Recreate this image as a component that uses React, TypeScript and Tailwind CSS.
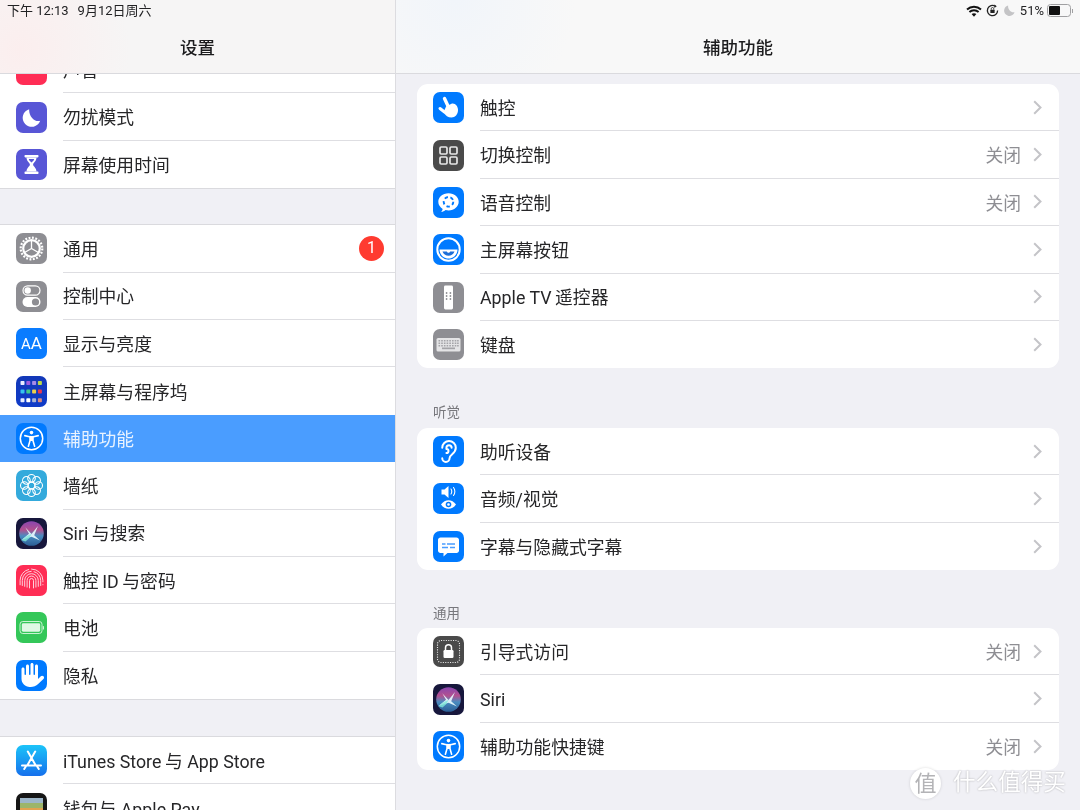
import { useId, type ReactNode } from "react";
import { Ear } from "lucide-react";
import { FaHand } from "react-icons/fa6";

function Tile({ bg, children }: { bg: string; children: ReactNode }) {
  return (
    <div className={`flex size-[31px] shrink-0 items-center justify-center overflow-hidden rounded-[7px] ${bg}`}>
      {children}
    </div>
  );
}

function Glyph({ children }: { children: ReactNode }) {
  return (
    <svg viewBox="0 0 31 31" className="size-[31px]" fill="none">
      {children}
    </svg>
  );
}

function Accessibility() {
  return (
    <Tile bg="bg-[#007aff]">
      <Glyph>
        <circle cx="15.5" cy="15.5" r="11.2" stroke="#fff" strokeWidth="1.5" />
        <circle cx="15.5" cy="9.6" r="1.8" fill="#fff" />
        <path d="M8.8 12.6l4.600 1.100h4.200l4.600-1.100" stroke="#fff" strokeWidth="1.600" strokeLinecap="round" />
        <path d="M14 13.600v4l-1.600 5.600M17 13.600v4l1.600 5.600" stroke="#fff" strokeWidth="1.600" strokeLinecap="round" />
        <rect x="14" y="13.500" width="3" height="4.500" fill="#fff" />
      </Glyph>
    </Tile>
  );
}

function Siri() {
  const id = useId();
  return (
    <Tile bg="bg-[#17173c]">
      <Glyph>
        <defs>
          <linearGradient id={id} x1="0.5" y1="0" x2="0.5" y2="1">
            <stop offset="0%" stopColor="#8a46b0" />
            <stop offset="35%" stopColor="#b2508f" />
            <stop offset="60%" stopColor="#4a8cc0" />
            <stop offset="100%" stopColor="#2b5e96" />
          </linearGradient>
        </defs>
        <circle cx="15.5" cy="15.5" r="12.300" fill={`url(#${id})`} />
        <path d="M15.500 16L22 8l-3.800 9.300 5.800 5.200-8.500-3.700-10 3.300 7.500-6.300-3.700-6.500z" fill="#e9fbff" opacity="0.9" />
        <path d="M5.500 22.300c3.500-3.300 6.500-5.300 10-6.300-1.500 3.300-3 5.300-6 7.500z" fill="#7fe8d8" opacity="0.8" />
      </Glyph>
    </Tile>
  );
}

const sidebarIcons: Record<string, ReactNode> = {
  sound: <Tile bg="bg-[#ff2d55]"><span /></Tile>,
  moon: (
    <Tile bg="bg-[#5856d6]">
      <Glyph>
        <path d="M13.200 7.200a9 9 0 1 0 11 11.600c-5.800 1.600-11.600-4.800-11-11.600z" fill="#fff" />
      </Glyph>
    </Tile>
  ),
  hourglass: (
    <Tile bg="bg-[#5856d6]">
      <Glyph>
        <rect x="8.500" y="6" width="14" height="2.400" rx="0.800" fill="#fff" />
        <rect x="8.500" y="22.600" width="14" height="2.400" rx="0.800" fill="#fff" />
        <path d="M10.500 8.400h10c0 4-3.400 5-3.400 7.100s3.400 3.100 3.400 7.100h-10c0-4 3.400-5 3.400-7.100s-3.400-3.100-3.400-7.100z" fill="#fff" />
        <path d="M12.800 10h5.400c-.4 1.800-1.700 2.600-2.700 3.600-1-1-2.300-1.800-2.700-3.600z" fill="#5856d6" />
      </Glyph>
    </Tile>
  ),
  gear: (
    <Tile bg="bg-[#8e8e93]">
      <Glyph>
        <circle cx="15.500" cy="15.500" r="10.800" stroke="#fff" strokeWidth="2.200" strokeDasharray="1.900 1.500" />
        <circle cx="15.500" cy="15.500" r="8.300" stroke="#fff" strokeWidth="2.200" />
        <path d="M15.500 15.500V8M15.500 15.500l6.500 3.800M15.500 15.500L9 19.300" stroke="#fff" strokeWidth="1.300" />
      </Glyph>
    </Tile>
  ),
  toggles: (
    <Tile bg="bg-[#8e8e93]">
      <Glyph>
        <rect x="7" y="4.800" width="17" height="9.400" rx="4.700" stroke="#fff" strokeWidth="1.200" />
        <circle cx="11.700" cy="9.500" r="3.200" fill="#fff" />
        <rect x="6.500" y="16" width="18" height="10" rx="5" fill="#fff" />
        <circle cx="19.500" cy="21" r="3.600" fill="#8e8e93" />
      </Glyph>
    </Tile>
  ),
  aa: (
    <Tile bg="bg-[#0a7cff]">
      <span className="text-[17px] leading-none text-white">
        <span className="text-[15px]">A</span>A
      </span>
    </Tile>
  ),
  home: (
    <Tile bg="bg-[linear-gradient(180deg,#1338b8,#0f3bc8)]">
      <Glyph>
        {[
          ["#e8ecff", "#a05ce0", "#a58ae8", "#b9d84a"],
          ["#35c3ee", "#42c98a", "#f0cf4a", "#e8384f"],
          ["#e6ecff", "#ffffff", "#a9b4d4", "#d98a80"],
        ].map((row, y) =>
          row.map((c, x) => <rect key={`${x}-${y}`} x={4.500 + x * 5.800} y={5 + y * 8.600} width="4" height="4" rx="0.800" fill={c} />),
        )}
      </Glyph>
    </Tile>
  ),
  access: <Accessibility />,
  wallpaper: (
    <Tile bg="bg-[#34aadc]">
      <Glyph>
        {[0, 45, 90, 135, 180, 225, 270, 315].map((a) => (
          <circle key={a} cx="15.500" cy="8.300" r="3.800" stroke="#fff" strokeWidth="1.100" transform={`rotate(${a} 15.500 15.500)`} />
        ))}
        <circle cx="15.500" cy="15.500" r="3.400" stroke="#fff" strokeWidth="1.100" />
      </Glyph>
    </Tile>
  ),
  siri: <Siri />,
  touchid: (
    <Tile bg="bg-[#ff2d55]">
      <Glyph>
        {[2, 4.400, 6.800, 9.200, 11.400].map((r) => (
          <path key={r} d={`M${15.500 - r} ${24 - r / 3}V15.500a${r} ${r} 0 0 1 ${2 * r} 0V${24 - r / 3}`} stroke="#ffd0da" strokeWidth="1" strokeDasharray={r > 8 ? "20 2" : undefined} />
        ))}
      </Glyph>
    </Tile>
  ),
  battery: (
    <Tile bg="bg-[#34c759]">
      <Glyph>
        <rect x="4" y="9.500" width="22" height="12" rx="2.800" stroke="#c9f2d3" strokeWidth="1" />
        <rect x="5.800" y="11.300" width="18.400" height="8.400" rx="1.400" fill="#dff8e5" />
        <rect x="26.800" y="14" width="1.200" height="3.500" rx="0.600" fill="#c9f2d3" />
      </Glyph>
    </Tile>
  ),
  privacy: (
    <Tile bg="bg-[#007aff]">
      <FaHand className="size-[24px] -scale-x-100 text-white" />
    </Tile>
  ),
  appstore: (
    <Tile bg="bg-[linear-gradient(180deg,#1cc4f9,#1670ec)]">
      <Glyph>
        <path d="M19.200 6.500L11.500 20M11.800 6.500l7.700 13.500M6 20.500h19M8.200 24l1.600-2.500M22.800 24l-1.600-2.500" stroke="#fff" strokeWidth="2" strokeLinecap="round" />
      </Glyph>
    </Tile>
  ),
  wallet: (
    <Tile bg="bg-[#161616]">
      <Glyph>
        <rect x="4" y="5" width="23" height="5" fill="#9db6c9" />
        <rect x="4" y="10" width="23" height="5" fill="#9cb56a" />
        <rect x="4" y="15" width="23" height="5" fill="#e2a24f" />
        <rect x="4" y="20" width="23" height="6" fill="#d9685c" />
      </Glyph>
    </Tile>
  ),
};

const detailIcons: Record<string, ReactNode> = {
  touch: (
    <Tile bg="bg-[#007aff]">
      <Glyph>
        <path d="M11.500 6.500l4.200 9" stroke="#fff" strokeWidth="3.400" strokeLinecap="round" />
        <path d="M7 16.500l4.500 3.500" stroke="#fff" strokeWidth="3" strokeLinecap="round" />
        <path d="M13 14.500l6-3c3.500-.5 6 3 6 6.500 0 4.500-3 7.500-6.500 7.500-3.500 0-6-2-8-5z" fill="#fff" />
      </Glyph>
    </Tile>
  ),
  switch: (
    <Tile bg="bg-[#4a4a4a]">
      <Glyph>
        {[7, 17].map((x) =>
          [7, 17].map((y) => (
            <rect key={`${x}-${y}`} x={x} y={y} width="7" height="7" rx="1.200" stroke="#e6e6e6" strokeWidth="1.700" />
          )),
        )}
      </Glyph>
    </Tile>
  ),
  voice: (
    <Tile bg="bg-[#007aff]">
      <Glyph>
        <path d="M15.500 6.200c5.900 0 10.200 3.800 10.200 8.600s-4.300 8.600-10.200 8.600c-1 0-2-.1-2.900-.4-1.200 1-2.800 1.700-4.400 1.900.8-.9 1.300-1.900 1.500-3-2.700-1.600-4.400-4.100-4.400-7.100 0-4.800 4.300-8.600 10.200-8.600z" fill="#fff" />
        <circle cx="15.500" cy="14.800" r="4.800" stroke="#007aff" strokeWidth="1.900" strokeDasharray="3.400 2.600" />
      </Glyph>
    </Tile>
  ),
  homebtn: (
    <Tile bg="bg-[#007aff]">
      <Glyph>
        <circle cx="15.500" cy="15.500" r="11.200" stroke="#fff" strokeWidth="2" />
        <path d="M6.500 15.500h18c0 5-4 9-9 9s-9-4-9-9z" fill="#fff" />
        <path d="M9.500 17.500h4.300l1 1.200h1.400l1-1.200h4.300c-.8 2.500-3.200 4.300-6 4.300s-5.200-1.800-6-4.300z" fill="#1d6fd8" />
      </Glyph>
    </Tile>
  ),
  remote: (
    <Tile bg="bg-[#8e8e93]">
      <Glyph>
        <rect x="11" y="3.500" width="9" height="24" rx="1.400" fill="#fff" />
        {[11, 14, 17].map((y) => (
          <g key={y}>
            <circle cx="13.600" cy={y} r="0.900" fill="#8e8e93" />
            <circle cx="17.400" cy={y} r="0.900" fill="#8e8e93" />
          </g>
        ))}
      </Glyph>
    </Tile>
  ),
  keyboard: (
    <Tile bg="bg-[#8e8e93]">
      <Glyph>
        <rect x="3.500" y="9" width="24" height="13.500" rx="1.600" fill="#e4e4e6" />
        {[11, 13.500, 16].map((y) =>
          [5.500, 8.200, 10.900, 13.600, 16.300, 19, 21.700, 24.100].map((x) => (
            <rect key={`${x}-${y}`} x={x} y={y} width="1.600" height="1.500" fill="#a4a4a8" />
          )),
        )}
        <rect x="9" y="18.500" width="13" height="1.700" fill="#a4a4a8" />
      </Glyph>
    </Tile>
  ),
  ear: (
    <Tile bg="bg-[#007aff]">
      <Ear className="size-[25px] text-white" strokeWidth={1.900} />
    </Tile>
  ),
  av: (
    <Tile bg="bg-[#007aff]">
      <Glyph>
        <path d="M8.500 6.500h3l4-3.500v12l-4-3.500h-3z" fill="#fff" />
        <path d="M18 6c1 1.200 1 3.800 0 5M20.500 4.500c1.800 2.200 1.800 5.800 0 8" stroke="#fff" strokeWidth="1.100" strokeLinecap="round" />
        <path d="M8 21.500c4-5.800 11-5.800 15 0-4 5.800-11 5.800-15 0z" fill="#fff" />
        <circle cx="15.500" cy="21.500" r="2.800" fill="#007aff" />
        <circle cx="15.500" cy="21.500" r="1.300" fill="#fff" />
      </Glyph>
    </Tile>
  ),
  caption: (
    <Tile bg="bg-[#007aff]">
      <Glyph>
        <path d="M7.500 6.500h16c1.400 0 2.500 1.100 2.500 2.500v10.500c0 1.400-1.100 2.500-2.500 2.500h-9l-4 3.500v-3.500h-3c-1.400 0-2.500-1.100-2.500-2.500V9c0-1.400 1.100-2.500 2.500-2.500z" fill="#fff" />
        <path d="M9 13h3.500M14 13h8M9 16.500h6M17 16.500h5" stroke="#4a9dff" strokeWidth="1.300" />
      </Glyph>
    </Tile>
  ),
  guided: (
    <Tile bg="bg-[#4a4a4a]">
      <Glyph>
        <rect x="4.500" y="4.500" width="22" height="22" rx="3.500" stroke="#e8e8e8" strokeWidth="1.100" strokeDasharray="1.100 1.300" />
        <rect x="10.500" y="14" width="10" height="8" rx="1.200" fill="#fff" />
        <path d="M12.500 14v-2.300a3 3 0 0 1 6 0V14" stroke="#fff" strokeWidth="1.500" />
      </Glyph>
    </Tile>
  ),
  siri: <Siri />,
  access: <Accessibility />,
};

type Item = { icon: string; label: string; value?: string };

const groups: { title: string; h: string; pb: string; items: Item[] }[] = [
  {
    title: "",
    h: "",
    pb: "",
    items: [
      { icon: "touch", label: "触控" },
      { icon: "switch", label: "切换控制", value: "关闭" },
      { icon: "voice", label: "语音控制", value: "关闭" },
      { icon: "homebtn", label: "主屏幕按钮" },
      { icon: "remote", label: "Apple TV\u2009遥控器" },
      { icon: "keyboard", label: "键盘" },
    ],
  },
  {
    title: "听觉",
    h: "h-[59.500px]",
    pb: "pb-[7px]",
    items: [
      { icon: "ear", label: "助听设备" },
      { icon: "av", label: "音频/视觉" },
      { icon: "caption", label: "字幕与隐藏式字幕" },
    ],
  },
  {
    title: "通用",
    h: "h-[58px]",
    pb: "pb-[6px]",
    items: [
      { icon: "guided", label: "引导式访问", value: "关闭" },
      { icon: "siri", label: "Siri" },
      { icon: "access", label: "辅助功能快捷键", value: "关闭" },
    ],
  },
];

function SideRow({ icon, label, active, badge, last }: { icon: string; label: string; active?: boolean; badge?: boolean; last?: boolean }) {
  return (
    <div className={`flex h-[47.400px] items-center pl-[16px] ${active ? "bg-[#4a9dff]" : ""}`}>
      {sidebarIcons[icon]}
      <div
        className={`ml-[16px] flex h-full flex-1 items-center justify-between pr-[11px] text-[17.800px] ${
          active ? "text-[#e9f3ff]" : "text-[#262628]"
        } ${last || active ? "" : "border-b border-[#dedee2]"}`}
      >
        <span className="pt-[4px]">{label}</span>
        {badge && (
          <span className="flex size-[25px] items-center justify-center rounded-full bg-[#ff3b30] text-[16px] text-white">1</span>
        )}
      </div>
    </div>
  );
}

function DetailRow({ item, last }: { item: Item; last: boolean }) {
  return (
    <div className="flex h-[47.400px] items-center pl-[16px]">
      {detailIcons[item.icon]}
      <div className={`ml-[16px] flex h-full flex-1 items-center pr-[17px] text-[17.800px] text-[#262628] ${last ? "" : "border-b border-[#dedee2]"}`}>
        <span className="flex-1 pt-[4px]">{item.label}</span>
        {item.value && <span className="mr-[12px] pt-[4px] text-[#8e8e93]">{item.value}</span>}
        <svg viewBox="0 0 9 15" className="h-[15px] w-[9px]" fill="none">
          <path d="M1.200 1.200l6.300 6.300-6.300 6.300" stroke="#c4c4c8" strokeWidth="2" />
        </svg>
      </div>
    </div>
  );
}

function StatusIcons() {
  return (
    <div className="flex items-center text-[13px] text-[#222224]">
      <svg viewBox="0 0 16 12" className="h-[12px] w-[16px]" fill="none">
        <path d="M1 4.500c3.900-3.700 10.100-3.700 14 0M3.400 7c2.600-2.400 6.600-2.400 9.200 0" stroke="#111" strokeWidth="1.900" />
        <path d="M5.600 9.100c1.500-1.300 3.300-1.300 4.800 0L8 11.800z" fill="#111" />
      </svg>
      <svg viewBox="0 0 14 14" className="ml-[4px] size-[13px]" fill="none">
        <path d="M12.500 7A5.500 5.500 0 1 1 10 2.400" stroke="#222" strokeWidth="1.400" />
        <path d="M9 0.500l2.600 2-2.600 1.900z" fill="#222" />
        <rect x="4.700" y="6.200" width="4.600" height="3.600" rx="0.500" fill="#222" />
        <path d="M5.600 6.200V5.200a1.400 1.400 0 0 1 2.800 0v1" stroke="#222" strokeWidth="0.900" />
      </svg>
      <svg viewBox="0 0 12 12" className="ml-[5px] size-[11px]">
        <path d="M4.500 0.500a5.800 5.800 0 1 0 7 7.300C7.800 8.800 3.900 4.800 4.500 0.500z" fill="#c4c4c6" />
      </svg>
      <span className="ml-[5px]">51%</span>
      <div className="ml-[3px] flex items-center">
        <div className="h-[13px] w-[24px] rounded-[3.500px] border border-[#a0a0a2] p-[1px]">
          <div className="h-full w-[11px] rounded-[1px] bg-[#111]" />
        </div>
        <div className="ml-[1px] h-[4px] w-[1px] bg-[#a0a0a2]" />
      </div>
    </div>
  );
}

export default function App() {
  return (
    <div className="relative flex h-[810px] w-[1080px] overflow-hidden bg-[#f0f0f5] blur-[0.500px] font-['Roboto','Noto_Sans_CJK_SC',sans-serif]">
      <div className="flex w-[396px] shrink-0 flex-col border-r border-[#dcdce0]">
        <header className="h-[74px] shrink-0 border-b border-[#dadade] bg-[radial-gradient(circle_at_20px_50px,#fbeeee,#f6f5f5_110px)]">
          <div className="flex h-[21px] items-center gap-[9px] pl-[7px] text-[13px] text-[#222224]">
            <span>下午 12:13</span>
            <span>9月12日周六</span>
          </div>
          <h1 className="mt-[15px] text-center text-[17.500px] leading-[24px] font-medium text-[#1c1c1e]">设置</h1>
        </header>
        <div className="flex-1 overflow-hidden">
          <div className="-mt-[28px] border-b border-[#dadade] bg-white">
            <SideRow icon="sound" label="声音" />
            <SideRow icon="moon" label="勿扰模式" />
            <SideRow icon="hourglass" label="屏幕使用时间" last />
          </div>
          <div className="mt-[35px] border-y border-[#dadade] bg-white">
            <SideRow icon="gear" label="通用" badge />
            <SideRow icon="toggles" label="控制中心" />
            <SideRow icon="aa" label="显示与亮度" />
            <SideRow icon="home" label="主屏幕与程序坞" last />
            <SideRow icon="access" label="辅助功能" active />
            <SideRow icon="wallpaper" label="墙纸" />
            <SideRow icon="siri" label={"Siri\u2009与搜索"} />
            <SideRow icon="touchid" label={"触控\u2009ID\u2009与密码"} />
            <SideRow icon="battery" label="电池" />
            <SideRow icon="privacy" label="隐私" last />
          </div>
          <div className="mt-[36px] border-y border-[#dadade] bg-white">
            <SideRow icon="appstore" label={"iTunes Store\u2009与 App Store"} />
            <SideRow icon="wallet" label="钱包与 Apple Pay" last />
          </div>
        </div>
      </div>

      <div className="flex flex-1 flex-col">
        <header className="h-[74px] shrink-0 border-b border-[#dadade] bg-[radial-gradient(circle_at_60px_0px,#f1f5fa,#f8f8f8_120px)]">
          <div className="flex h-[21px] items-center justify-end pr-[7px]">
            <StatusIcons />
          </div>
          <h2 className="mt-[15px] text-center text-[17.500px] leading-[24px] font-medium text-[#1c1c1e]">辅助功能</h2>
        </header>
        <div className="flex-1 overflow-hidden px-[21px] pt-[10px]">
          {groups.map((g) => (
            <section key={g.title}>
              {g.title && (
                <div className={`flex items-end pl-[16px] text-[13.500px] leading-[18px] text-[#77777c] ${g.h} ${g.pb}`}>{g.title}</div>
              )}
              <div className="overflow-hidden rounded-[11px] bg-white">
                {g.items.map((item, i) => (
                  <DetailRow key={item.label} item={item} last={i === g.items.length - 1} />
                ))}
              </div>
            </section>
          ))}
        </div>
      </div>

      <div className="absolute top-[768px] left-[910px] flex items-center gap-[12px]">
        <div className="flex size-[31px] items-center justify-center rounded-full bg-white text-[22px] leading-none text-[#b3b3b6] shadow-[0_0_3px_rgba(0,0,0,0.15)]">值</div>
        <span className="text-[22.600px] leading-none whitespace-nowrap text-white [text-shadow:0_0_2px_rgba(0,0,0,0.3)]">什么值得买</span>
      </div>
    </div>
  );
}
